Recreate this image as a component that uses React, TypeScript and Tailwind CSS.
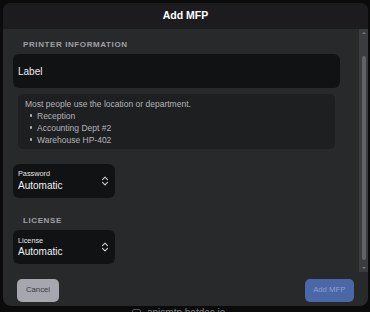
import React from 'react';

const SectionTitle = ({ children }: { children: React.ReactNode }) => (
  <div className="pl-[10px] h-[10px] leading-[10px] text-[8px] font-bold tracking-[0.6px] text-[#a0a0a6] uppercase">
    {children}
  </div>
);

const UpDown = () => (
  <svg width="8" height="10" viewBox="0 0 8 10" fill="none" stroke="#c8c8cc" strokeWidth="1.2" strokeLinecap="round" strokeLinejoin="round">
    <path d="M1.5 3.6 L4 1.1 L6.5 3.6" />
    <path d="M1.5 6.4 L4 8.9 L6.5 6.4" />
  </svg>
);

const SelectBox = ({ label, value }: { label: string; value: string }) => (
  <div className="w-[102px] h-[34px] rounded-[6px] bg-[#111214] flex items-center justify-between pl-[5px] pr-[6px]">
    <div className="flex flex-col">
      <span className="text-[7.3px] leading-[9px] text-[#e4e4e6]">{label}</span>
      <span className="mt-[1.5px] text-[10px] leading-[12px] text-[#f0f0f2]">{value}</span>
    </div>
    <UpDown />
  </div>
);

const Scrollbar = () => (
  <div className="w-[9px] h-full bg-[#3b3c3f] flex flex-col items-center">
    <div className="h-[8px] flex items-center justify-center">
      <div className="w-0 h-0 border-l-[2px] border-r-[2px] border-b-[2px] border-l-transparent border-r-transparent border-b-[#77787b]" />
    </div>
    <div className="flex-1 w-full flex flex-col px-[2.5px]">
      <div className="h-[19px]" />
      <div className="flex-1 rounded-full bg-[#616265]" />
      <div className="h-[4px]" />
    </div>
    <div className="h-[8px] flex items-center justify-center">
      <div className="w-0 h-0 border-l-[2px] border-r-[2px] border-t-[2px] border-l-transparent border-r-transparent border-t-[#77787b]" />
    </div>
  </div>
);

export default function App() {
  const examples = ['Reception', 'Accounting Dept #2', 'Warehouse HP-402'];

  return (
    <div className="w-[370px] h-[312px] overflow-hidden bg-[#0b0b0c] font-['Liberation_Sans',Arial,sans-serif]">
      <div className="ml-[3px] mt-[3px] w-[365px] h-[303px] rounded-[8px] bg-[#28292b] overflow-hidden flex flex-col">
        <div className="h-[26px] shrink-0 bg-[#1c1c1e] flex items-center justify-center text-[10.5px] font-bold text-white">
          Add MFP
        </div>

        <div className="h-[243px] flex">
          <div className="flex-1 pl-[10px] pr-[19px] pt-[11px]">
            <SectionTitle>Printer Information</SectionTitle>

            <div className="mt-[4px] h-[34px] rounded-[6px] bg-[#111214] flex items-center pl-[5px] text-[10px] text-[#ececee]">
              Label
            </div>

            <div className="mt-[6px] mx-[5px] h-[54.5px] rounded-[5px] bg-[#1e1f21] pl-[7px] pt-[3.5px] text-[8.5px] leading-[12px] text-[#b4b4b8]">
              <p>Most people use the location or department.</p>
              <ul>
                {examples.map((ex) => (
                  <li key={ex} className="flex items-center">
                    <span className="ml-[4.5px] mr-[5px] w-[2.5px] h-[2.5px] rounded-full bg-[#b4b4b8]" />
                    {ex}
                  </li>
                ))}
              </ul>
            </div>

            <div className="mt-[15px]">
              <SelectBox label="Password" value="Automatic" />
            </div>

            <div className="mt-[18.5px]">
              <SectionTitle>License</SectionTitle>
            </div>

            <div className="mt-[4px]">
              <SelectBox label="License" value="Automatic" />
            </div>
          </div>
          <Scrollbar />
        </div>

        <div className="flex-1 flex items-start justify-between px-[14px] pt-[7px]">
          <button className="w-[42px] h-[22.5px] rounded-[5px] bg-[#a6a6ae] text-[7.7px] text-[#3a3a41]">
            Cancel
          </button>
          <button className="w-[49.5px] h-[22.5px] rounded-[5px] bg-[#4a67a8] text-[7.7px] text-[#8ea1cc]">
            Add MFP
          </button>
        </div>
      </div>

      <div className="mt-[1px] pl-[132px] flex items-center gap-[6px] text-[10px] leading-[12px] text-[#7c7c80]">
        <span className="w-[9px] h-[9px] rounded-[2px] border border-[#55565a]" />
        <span>apismtp.botdoc.io</span>
      </div>
    </div>
  );
}
